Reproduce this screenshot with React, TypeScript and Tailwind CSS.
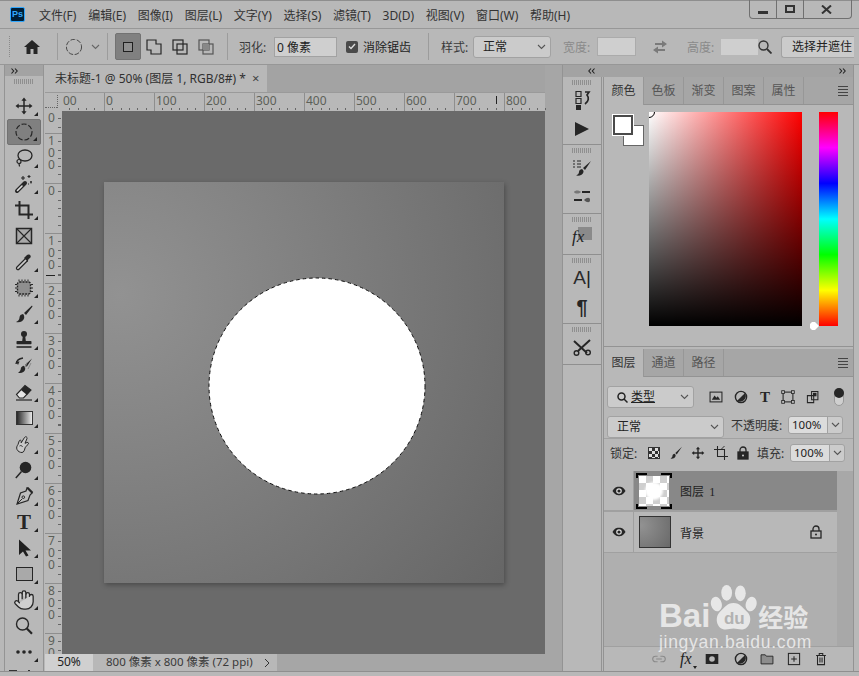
import React from 'react';
import { Hand } from 'lucide-react';

const INK = '#262626';

const Ico: React.FC<{ size?: number; children: React.ReactNode }> = ({ size = 20, children }) => (
  <svg width={size} height={size} viewBox="0 0 20 20" fill="none" stroke={INK} strokeWidth="1.5" className="shrink-0">
    {children}
  </svg>
);

const Sep = ({ ml }: { ml: string }) => <div className={`w-px h-[27px] bg-[#9c9c9c] shrink-0 ${ml}`} />;

const Chevron = ({ color = '#555' }: { color?: string }) => (
  <svg width="9" height="6" viewBox="0 0 9 6" fill="none" stroke={color} strokeWidth="1.1" className="shrink-0"><path d="M1 1l3.5 3.5L8 1" /></svg>
);

const Double = ({ left }: { left?: boolean }) => (
  <svg width="7" height="6" viewBox="0 0 7 6" fill="none" stroke="#222" strokeWidth="1.100" className="shrink-0">
    <path d={left ? 'M3 .5L.8 3 3 5.500M6.500 .5L4.300 3l2.200 2.500' : 'M.5 .5L2.700 3 .5 5.500M4 .5L6.200 3 4 5.500'} />
  </svg>
);

const MenuLines = () => (
  <div className="w-[10px] flex flex-col gap-[2px] shrink-0">
    <div className="h-px bg-[#444]" /><div className="h-px bg-[#444]" /><div className="h-px bg-[#444]" /><div className="h-px bg-[#444]" />
  </div>
);

const Grip = () => <div className="h-[5px] w-[20px] mx-auto bg-[repeating-linear-gradient(to_right,#8f8f8f_0,#8f8f8f_1px,transparent_1px,transparent_2px)]" />;

const tools: { icon: React.ReactNode; corner?: boolean; active?: boolean }[] = [
  { corner: true, icon: <Ico><path d="M10 1.5l2.6 3.2H7.400zM10 18.500l2.600-3.200H7.400zM1.500 10l3.200-2.600v5.200zM18.500 10l-3.200-2.600v5.200z" fill={INK} stroke="none" /><path d="M10 4v12M4 10h12" /></Ico> },
  { corner: true, active: true, icon: <Ico><circle cx="10" cy="10" r="8" strokeDasharray="5 2" strokeWidth="1.200" /></Ico> },
  { corner: true, icon: <Ico><ellipse cx="11" cy="7.500" rx="7" ry="5.500" strokeWidth="1.300" /><circle cx="5" cy="13.500" r="2" strokeWidth="1.200" /><path d="M5 15.500c0 1 .5 2 .5 3" strokeWidth="1.200" /></Ico> },
  { corner: true, icon: <Ico><path d="M3 17L11 9" stroke={INK} strokeWidth="4" strokeLinecap="round" /><path d="M3.500 16.500L8 12" stroke="#ddd" strokeWidth="1.600" strokeLinecap="round" /><path d="M9 2v4M7 4h4M15 1v3M13.500 2.500h3M17 7v2.500M16 8h2M14 10h1" strokeWidth="1.100" /></Ico> },
  { corner: true, icon: <Ico><path d="M5.500 1v13.500H19M1 5.500h13.500V19" strokeWidth="2" /></Ico> },
  { icon: <Ico><rect x="2.500" y="2.500" width="15" height="15" fill="#a9a9a9" /><path d="M2.500 2.500l15 15M17.500 2.500l-15 15" strokeWidth="1.200" /></Ico>, corner: false },
  { corner: true, icon: <Ico><path d="M11.500 6.500L3 15c-1 1-.5 1.800 0 2.200s1.300.8 2.200-.2l8.500-8.500" fill="#ccc" strokeWidth="1.200" /><path d="M10 6l1.500-1.500 1-1c1.500-2 4-1 4.200.6s-.9 2-2.200 3.200l-.5 1.200L14 10z" fill={INK} stroke="none" /></Ico> },
  { corner: true, icon: <Ico><rect x="3.500" y="4" width="13" height="12" rx="2" fill="#8f8f8f" strokeDasharray="2 1" strokeWidth="1.400" /><path d="M5 1.500v2M8 1.500v2M11 1.500v2M14 1.500v2M5 16.500v2M8 16.500v2M11 16.500v2M14 16.500v2M1 6.500h2M1 10h2M1 13.500h2M17 6.500h2M17 10h2M17 13.500h2" strokeWidth="1" /></Ico> },
  { corner: true, icon: <Ico><path d="M18 1.500L10 9l2 2 6.500-8.500zM9 10c-2 .3-3.500 1.500-3.500 3.500 0 2-1.500 3.500-3.500 4.500 3.500.8 7.500-.5 8.200-4 .2-1.500-.2-3-1.200-4z" fill={INK} stroke="none" /></Ico> },
  { corner: true, icon: <Ico><circle cx="10" cy="4" r="3" fill={INK} stroke="none" /><path d="M8.800 6h2.400l.6 5H8.200z" fill={INK} stroke="none" /><rect x="2.500" y="11" width="15" height="3.200" rx=".8" fill={INK} stroke="none" /><path d="M2.500 17h15" strokeWidth="1.600" /></Ico> },
  { corner: true, icon: <Ico><path d="M18 2.500L11 9l1.800 1.800zM9.800 9.800c-2 .3-3 1.700-3 3 0 1.500-1.200 3-2.800 4 3.200.8 6.500-.3 7.200-3.500.2-1.300-.3-2.600-1.400-3.500z" fill={INK} stroke="none" /><path d="M9 2C5.500 2.500 2.500 5 2 8" strokeWidth="1.400" /><path d="M2 5.500h3.500L4 9z" fill={INK} stroke="none" /><path d="M13 6.500l-2 5M17 7l-3 6" stroke="#888" strokeWidth="1" /></Ico> },
  { corner: true, icon: <Ico><path d="M2.500 12.500L11 3.500l6 4.500-7.500 8H5.500z" fill="#e5e5e5" stroke={INK} strokeWidth="1.100" /><path d="M7 8L11 3.500l6 4.500-4 5z" fill={INK} stroke="none" /><path d="M2 18h16" strokeWidth="1.200" /></Ico> },
  { corner: true, icon: <svg width="17" height="14" viewBox="0 0 17 14" className="shrink-0"><defs><linearGradient id="grad"><stop offset="0" stopColor="#222" /><stop offset="1" stopColor="#eee" /></linearGradient></defs><rect x=".5" y=".5" width="16" height="13" fill="url(#grad)" stroke="#333" /></svg> },
  { corner: true, icon: <Ico><path d="M8 18.500c-2 0-4-1-5-3-.8-2 0-3.500 1-5l1.200-3.500c.5-1.300 2-1 2 .2v1.600l3.300-5.300c1-1.500 3-.5 2.500 1l-2 4.800 2-.8c1.500-.5 2 1 1 2l-2.800 2.800c-.5 2.200-1.200 5.200-3.200 5.200z" fill="#c8c8c8" strokeWidth="1" /><path d="M5.500 12c1-.8 2.500-.5 3 .8" strokeWidth=".9" /></Ico> },
  { corner: true, icon: <Ico><circle cx="11.500" cy="7.500" r="5.800" fill={INK} stroke="none" /><path d="M7.500 11.500L1.800 18" strokeWidth="1.500" /></Ico> },
  { corner: true, icon: <Ico><path d="M13 2l5 5-2 2-2 5.500L3 18l3.500-11L12 5z" fill="#bdbdbd" strokeWidth="1.200" /><path d="M12.500 1.800l5.700 5.700 1-1.500-5-5z" fill={INK} stroke="none" /><path d="M3 18l5-5" strokeWidth="1" /><circle cx="9.300" cy="11.200" r="1.300" strokeWidth="1" /></Ico> },
  { corner: true, icon: <span className="font-['Liberation_Serif',serif] font-bold text-[21px] leading-none text-[#262626]">T</span> },
  { corner: true, icon: <Ico><path d="M5 1.500v15.500l4-3.500 3 5 2.500-1-3-5h5.500z" fill="#1f1f1f" stroke="none" /></Ico> },
  { corner: true, icon: <svg width="17" height="14" viewBox="0 0 17 14" className="shrink-0"><rect x=".5" y=".5" width="16" height="13" fill="#a9a9a9" stroke="#262626" /></svg> },
  { corner: true, icon: <Hand size={22} strokeWidth={1.400} color="#262626" fill="#cfcfcf" /> },
  { corner: false, icon: <Ico><circle cx="8.500" cy="8" r="6" fill="#bcbcbc" strokeWidth="1.400" /><path d="M12.800 12.500l5.200 5.200" strokeWidth="2.200" /></Ico> },
  { corner: true, icon: <svg width="16" height="4" viewBox="0 0 16 4" className="shrink-0"><circle cx="2" cy="2" r="1.800" fill="#262626" /><circle cx="8" cy="2" r="1.800" fill="#262626" /><circle cx="14" cy="2" r="1.800" fill="#262626" /></svg> },
];

const Toolbar = () => (
  <div className="relative w-[40px] shrink-0 ml-[4px] border-x border-[#949494] flex flex-col overflow-hidden">
    <div className="h-[11px] bg-[#a3a3a3] pl-[6px] pt-[3px] shrink-0"><Double /></div>
    <div className="h-[17px] pt-[3px] shrink-0"><Grip /></div>
    {tools.map((t, i) => (
      <div key={i} className="h-[26px] shrink-0 px-[2px]">
        <div className={`relative h-full flex items-center justify-center rounded-[2px] ${t.active ? 'bg-[#808080] border border-[#727272]' : ''}`}>
          {t.icon}
          {t.corner && <div className="absolute right-[3px] bottom-[3px] w-0 h-0 border-l-[4px] border-l-transparent border-b-[4px] border-b-[#222]" />}
        </div>
      </div>
    ))}
    <div className="absolute left-[4px] bottom-0 w-[8px] h-px bg-[#333]" />
    <div className="absolute left-[23px] bottom-0 w-[2px] h-px bg-[#333]" />
  </div>
);

const rulerTop = ['00', '0', '100', '200', '300', '400', '500', '600', '700', '800'];
const rulerLeft = ['0', '100', '0', '100', '200', '300', '400', '500', '600', '700', '800', '900'];

const TopRuler = () => (
  <div className="h-[18px] flex shrink-0 bg-[#b8b8b8] text-[#5c6058] text-[12px] leading-[15px]">
    <div className="w-[17px] shrink-0 relative">
      <div className="absolute left-[12px] top-[2px] h-[13px] border-l border-dotted border-[#666]" />
      <div className="absolute left-0 top-[14px] w-[12px] border-t border-dotted border-[#666]" />
    </div>
    {rulerTop.map((n, i) => (
      <div key={n} className={`relative shrink-0 h-full pl-[1px] ${i === 0 ? 'w-[42px]' : 'w-[50px] border-l border-[#8e8e8e]'}`}>
        {n}
        <div className="absolute left-0 right-0 bottom-[1px] h-[2px] bg-[repeating-linear-gradient(to_right,transparent_0,transparent_7.3px,#666_7.3px,#666_8.3px)]" />
      </div>
    ))}
    <div className="relative flex-1 h-full bg-[repeating-linear-gradient(to_right,transparent_0,transparent_7.3px,#666_7.3px,#666_8.3px)] bg-[length:100%_2px] bg-no-repeat bg-bottom" />
    <div className="absolute left-[496px] top-[96px] w-px h-[8px] bg-[#222]" />
  </div>
);

const LeftRuler = () => (
  <div className="w-[17px] shrink-0 overflow-hidden flex flex-col bg-[#b8b8b8] text-[#5c6058] text-[12px] leading-[12px]">
    {rulerLeft.map((n, i) => (
      <div key={i} className={`relative shrink-0 pl-[3px] pt-[1px] ${i === 0 ? 'h-[22px]' : 'h-[50px] border-t border-[#8e8e8e]'}`}>
        {n.split('').map((d, j) => <div key={j}>{d}</div>)}
        <div className="absolute top-0 bottom-0 right-[1px] w-[3px] bg-[repeating-linear-gradient(to_bottom,transparent_0,transparent_7.3px,#666_7.3px,#666_8.3px)]" />
      </div>
    ))}
    <div className="absolute left-[46px] top-[275px] w-[9px] h-px bg-[#222]" />
  </div>
);

const Canvas = () => (
  <div className="flex-1 bg-[#6a6a6a] flex items-center justify-center overflow-hidden">
    <div className="relative w-[400px] h-[401px] shrink-0 shadow-[1px_2px_5px_rgba(0,0,0,0.3)] bg-[radial-gradient(circle_at_4%_28%,#929292_0,#626262_520px)]">
      <svg width="218" height="218" viewBox="0 0 218 218" className="absolute left-[104px] top-[95px]">
        <circle cx="109" cy="109" r="108" fill="#fff" stroke="#111" strokeWidth="1" strokeDasharray="3.500 3" />
      </svg>
    </div>
  </div>
);

const DocArea = () => (
  <div className="w-[500px] ml-[1px] shrink-0 flex flex-col">
    <div className="h-[28px] bg-[#a3a3a3] shrink-0 flex border-b border-[#9a9a9a]">
      <div className="w-[222px] bg-[#b8b8b8] flex items-center pl-[10px] text-[12px] text-[#303030] whitespace-nowrap">
        未标题-1 @ 50% (图层 1, RGB/8#) *
        <span className="ml-[6px] text-[13px] text-[#444] leading-none">×</span>
      </div>
    </div>
    <TopRuler />
    <div className="flex-1 flex min-h-0">
      <LeftRuler />
      <Canvas />
    </div>
    <div className="h-[17px] shrink-0 flex text-[12px] leading-[16px] text-[#3a3a3a] bg-[#a6a6a6]">
      <div className="w-[48px] bg-[#d0d0d0] text-center text-[#222]">50%</div>
      <div className="w-[184px] bg-[#b8b8b8] flex pl-[13px] whitespace-nowrap">
        <span className="w-[158px] text-[11.500px]">800 像素 x 800 像素 (72 ppi)</span>
        <svg width="6" height="10" viewBox="0 0 6 10" fill="none" stroke="#333" className="mt-[4px]"><path d="M1 1l4 4-4 4" /></svg>
      </div>
    </div>
  </div>
);

const dockGroups: { h: string; items: React.ReactNode[] }[] = [
  { h: 'h-[68px]', items: [
    <Ico key="h"><path d="M4 1.500h5v5H4zM4 8.500h5v5H4z" strokeWidth="1.200" /><path d="M4 15h5v5H4z" fill={INK} stroke="none" /><path d="M13 2h4l-2 3c2 2.500 2 6-2 9" strokeWidth="1.700" /></Ico>,
    <Ico key="p"><path d="M3 3l14 7-14 7z" fill={INK} stroke="none" /></Ico>,
  ] },
  { h: 'h-[69px]', items: [
    <Ico key="b"><path d="M1 3h2M1 6h2M1 9h2M5 3h4M5 6h4M5 9h4" strokeWidth="1.200" /><path d="M19 3l-8 7 2 2zM10 11c-2 .3-3 1.500-3 3 0 1.500-1 2.500-3 3.500 3.500.6 7-.5 7.500-3.500.2-1-.3-2-1.500-3z" fill={INK} stroke="none" /></Ico>,
    <Ico key="s"><path d="M10 5h8M2 13h8" strokeWidth="1.800" /><path d="M2 5c1-2 5-2 7 0-2 2-6 2-7 0z" fill="#777" stroke="none" /><path d="M18 13c0-3-3-3-6 0 3 3 6 3 6 0z" fill="#555" stroke="none" /></Ico>,
  ] },
  { h: 'h-[41px]', items: [
    <div key="f" className="relative w-[20px] h-[20px]">
      <div className="absolute right-0 top-0 w-[14px] h-[13px] bg-[#8a8a8a]" />
      <span className="absolute left-[0px] top-[1px] font-['Liberation_Serif',serif] italic text-[17px] leading-[18px] text-[#222]">fx</span>
    </div>,
  ] },
  { h: 'h-[69px]', items: [
    <span key="a" className="text-[19px] leading-none text-[#2b2b2b] font-['Liberation_Sans',sans-serif]">A<span className="font-light text-[#222]">|</span></span>,
    <span key="q" className="text-[20px] leading-none font-bold text-[#262626] font-['Liberation_Sans',sans-serif]">¶</span>,
  ] },
  { h: 'h-[41px]', items: [
    <Ico key="t"><path d="M2 4l13 12M18 3L6 14" strokeWidth="2" /><circle cx="4.500" cy="16" r="2.300" strokeWidth="1.400" /><circle cx="16" cy="15.500" r="2.300" strokeWidth="1.400" /></Ico>,
  ] },
];

const Dock = () => (
  <div className="w-[38px] shrink-0 flex flex-col">
    {dockGroups.map((g, i) => (
      <div key={i} className={`shrink-0 border-b border-[#8f8f8f] pt-[3px] ${g.h}`}>
        <div className="h-[5px]"><Grip /></div>
        {g.items.map((icon, j) => <div key={j} className="h-[29px] flex items-center justify-center">{icon}</div>)}
      </div>
    ))}
  </div>
);

const PanelTabs = ({ items }: { items: string[] }) => (
  <div className="h-[28px] shrink-0 flex bg-[#a6a6a6] border-b border-[#939393] text-[12px]">
    {items.map((t, i) => (
      <div key={t} className={`w-[40px] flex items-center justify-center border-r border-[#979797] ${i === 0 ? 'bg-[#b8b8b8] text-[#333] h-[28px]' : 'text-[#555]'}`}>{t}</div>
    ))}
    <div className="flex-1 flex items-center justify-end pr-[5px]"><MenuLines /></div>
  </div>
);

const ColorPanel = () => (
  <div className="h-[270px] shrink-0 flex flex-col border-b border-[#939393]">
    <PanelTabs items={['颜色', '色板', '渐变', '图案', '属性']} />
    <div className="flex-1 flex pt-[7px] pl-[8px]">
      <div className="relative w-[37px] h-[36px] shrink-0 mt-[2px]">
        <div className="absolute left-[11px] top-[11px] w-[21px] h-[21px] bg-white border border-[#666]" />
        <div className="absolute left-[1px] top-[1px] w-[20px] h-[20px] bg-white border-2 border-[#4a4a4a] outline outline-1 outline-white" />
      </div>
      <div className="relative w-[153px] h-[214px] shrink-0 overflow-hidden bg-[linear-gradient(to_bottom,transparent,#000),linear-gradient(to_right,#fff,#f00)]">
        <div className="absolute left-[-6px] top-[-6px] w-[12px] h-[12px] rounded-full border border-black" />
      </div>
      <div className="relative w-[19px] h-[214px] ml-[17px] shrink-0 bg-[linear-gradient(to_bottom,#f00,#f0f,#00f,#0ff,#0f0,#ff0,#f00)]">
        <svg width="9" height="8" viewBox="0 0 9 8" className="absolute left-[-9px] bottom-[-4px]"><path d="M2 0h3l4 4-4 4H2L0 6V2z" fill="#fff" /></svg>
      </div>
    </div>
  </div>
);

const Box = ({ className, children }: { className: string; children: React.ReactNode }) => (
  <div className={`bg-[#cbcbcb] border border-[#a2a2a2] rounded-[3px] flex items-center shrink-0 ${className}`}>{children}</div>
);

const NumInput = () => (
  <Box className="w-[55px] h-[18px] ml-[5px] text-[11.500px] text-[#222]">
    <div className="w-[39px] bg-[#dcdcdc] h-full rounded-l-[3px] border-r border-[#a2a2a2] pl-[3px] leading-[16px]">100%</div>
    <div className="flex-1 flex justify-center"><Chevron /></div>
  </Box>
);

const Eye = () => (
  <svg width="14" height="10" viewBox="0 0 14 10"><path d="M.500 5C3 1 5 .8 7 .8S11 1 13.500 5C11 9 9 9.200 7 9.200S3 9 .500 5z" fill={INK} /><circle cx="7" cy="5" r="2.800" fill="#ddd" /><circle cx="7" cy="5" r="1.600" fill={INK} /></svg>
);

const LockGlyph = ({ filled }: { filled?: boolean }) => (
  <svg width="12" height="14" viewBox="0 0 12 14" fill="none" stroke={INK} strokeWidth="1.300"><path d="M3 6V4a3 3 0 016 0v2" /><rect x="1" y="6" width="10" height="7" fill={filled ? INK : 'none'} /><circle cx="6" cy="9.500" r="1" fill={filled ? '#ccc' : INK} stroke="none" /></svg>
);

const LayersPanel = () => (
  <div className="flex-1 flex flex-col min-h-0 mt-[2px] relative">
    <PanelTabs items={['图层', '通道', '路径']} />
    <div className="h-[35px] shrink-0 flex items-start pt-[9px] pl-[3px]">
      <Box className="w-[87px] h-[22px] text-[12px] text-[#222] pl-[9px]">
        <svg width="11" height="11" viewBox="0 0 11 11" fill="none" stroke="#222" strokeWidth="1.500"><circle cx="4.500" cy="4.500" r="3.500" /><path d="M7 7l3.500 3.500" /></svg>
        <span className="ml-[3px] underline">类型</span>
        <div className="ml-auto mr-[4px]"><Chevron /></div>
      </Box>
      <div className="flex items-center h-[22px]">
        <div className="ml-[15px]"><Ico size={14}><rect x="1.500" y="3" width="17" height="14" strokeWidth="1.500" /><path d="M4 14l4-6 2.500 3 2-2 3.500 5z" fill={INK} stroke="none" /></Ico></div>
        <div className="ml-[11px]"><Ico size={14}><circle cx="10" cy="10" r="8" strokeWidth="2" /><path d="M10 10l5.500-5.500a8 8 0 01-11 11z" fill={INK} stroke="none" /></Ico></div>
        <span className="ml-[10px] w-[14px] text-center font-['Liberation_Serif',serif] font-bold text-[15px] leading-none text-[#262626]">T</span>
        <div className="ml-[9px]"><Ico size={14}><rect x="3" y="3" width="14" height="14" /><rect x="1" y="1" width="4" height="4" fill="#bbb" strokeWidth="1.200" /><rect x="15" y="1" width="4" height="4" fill="#bbb" strokeWidth="1.200" /><rect x="1" y="15" width="4" height="4" fill="#bbb" strokeWidth="1.200" /><rect x="15" y="15" width="4" height="4" fill="#bbb" strokeWidth="1.200" /></Ico></div>
        <div className="ml-[11px]"><Ico size={14}><path d="M8 2h9v12H8zM2 8h9v10H2z" fill="#bbb" strokeWidth="1.500" /><path d="M10 4h5v5h-5z" fill={INK} stroke="none" /></Ico></div>
        <div className="relative ml-[14px] w-[10px] h-[18px] rounded-full bg-[#cfcfcf] border border-[#999]">
          <div className="absolute left-[-1px] top-[-1px] w-[10px] h-[10px] rounded-full bg-[#262626]" />
        </div>
      </div>
    </div>
    <div className="h-[27px] shrink-0 flex items-start pt-[4px] pl-[3px] border-b border-[#a2a2a2]">
      <Box className="w-[117px] h-[22px] text-[12px] text-[#222] pl-[9px]">正常<div className="ml-auto mr-[4px]"><Chevron /></div></Box>
      <span className="ml-[7px] w-[52px] text-[12px] leading-[20px] text-[#333] whitespace-nowrap">不透明度:</span>
      <NumInput />
    </div>
    <div className="h-[32px] shrink-0 flex items-start pt-[5px] pl-[6px]">
      <span className="w-[29px] text-[12px] leading-[20px] text-[#333] whitespace-nowrap">锁定:</span>
      <div className="flex items-center h-[18px]">
        <div className="ml-[9px] w-[12px] h-[12px] border border-[#333] bg-[conic-gradient(#333_25%,#ddd_0_50%,#333_0_75%,#ddd_0)] bg-[length:6px_6px]" />
        <div className="ml-[9px]"><Ico size={14}><path d="M18.500 1L9 10l2 2zM8 11c-2 .3-3 1.500-3 3s-1 3-3 4c3.500.5 7-.5 7.500-4 .1-1.200-.3-2.200-1.500-3z" fill={INK} stroke="none" /></Ico></div>
        <div className="ml-[8px]"><Ico size={14}><path d="M10 1l3 3.500H7zM10 19l3-3.500H7zM1 10l3.500-3v6zM19 10l-3.500-3v6z" fill={INK} stroke="none" /><path d="M10 4v12M4 10h12" strokeWidth="2" /></Ico></div>
        <div className="ml-[9px]"><Ico size={14}><path d="M5 0v15h15M0 5h15v15" strokeWidth="1.500" /><path d="M10 5l5-5" strokeWidth="1.300" /></Ico></div>
        <div className="ml-[9px]"><LockGlyph filled /></div>
      </div>
      <span className="ml-[8px] w-[28px] text-[12px] leading-[20px] text-[#333] whitespace-nowrap">填充:</span>
      <NumInput />
    </div>
    <div className="flex-1 flex min-h-0">
      <div className="flex-1 flex flex-col bg-[#afafaf]">
        <div className="h-[41px] shrink-0 flex border-b-2 border-[#a0a0a0]">
          <div className="w-[30px] bg-[#b8b8b8] border-r border-[#a0a0a0] flex items-center justify-center"><Eye /></div>
          <div className="flex-1 bg-[#888888] flex items-center">
            <div className="relative ml-[2px] w-[36px] h-[36px] flex items-center justify-center">
              <div className="w-[30px] h-[30px] bg-[conic-gradient(#cfcfcf_25%,#fff_0_50%,#cfcfcf_0_75%,#fff_0)] bg-[length:14px_14px] flex items-center justify-center">
                <div className="w-[18px] h-[18px] rounded-full bg-white blur-[1px]" />
              </div>
              <div className="absolute left-0 top-0 w-[11px] h-[5px] border-l-2 border-t-2 border-black" />
              <div className="absolute right-0 top-0 w-[11px] h-[5px] border-r-2 border-t-2 border-black" />
              <div className="absolute left-0 bottom-0 w-[11px] h-[5px] border-l-2 border-b-2 border-black" />
              <div className="absolute right-0 bottom-0 w-[11px] h-[5px] border-r-2 border-b-2 border-black" />
            </div>
            <span className="ml-[8px] pt-[3px] text-[12px] text-[#1f1f1f]">图层 <span className="font-['Liberation_Serif',serif] ml-[2px]">1</span></span>
          </div>
        </div>
        <div className="h-[41px] shrink-0 flex border-b border-[#a0a0a0] bg-[#b8b8b8]">
          <div className="w-[30px] border-r border-[#a0a0a0] flex items-center justify-center"><Eye /></div>
          <div className="flex-1 flex items-center">
            <div className="ml-[5px] w-[32px] h-[32px] border border-[#333] bg-[radial-gradient(circle_at_4%_28%,#929292_0,#626262_42px)]" />
            <span className="ml-[9px] pt-[3px] text-[12px] text-[#1f1f1f]">背景</span>
            <div className="ml-auto mr-[15px] flex"><LockGlyph /></div>
          </div>
        </div>
      </div>
      <div className="w-[16px] shrink-0 bg-[#a8a8a8]" />
    </div>
    <div className="h-[25px] shrink-0 bg-[#b8b8b8] border-t border-[#a0a0a0] flex items-center pl-[48px]">
      <Ico size={14}><path d="M8 6H5a3.500 3.500 0 000 8h3M12 6h3a3.500 3.500 0 010 8h-3M6 10h8" stroke="#8a8a8a" strokeWidth="1.600" /></Ico>
      <span className="relative ml-[14px] w-[14px] font-['Liberation_Serif',serif] italic text-[16px] leading-none text-[#222]">
        fx
        <div className="absolute right-[-3px] bottom-[-2px] w-0 h-0 border-x-[2px] border-x-transparent border-t-[3px] border-t-[#222]" />
      </span>
      <div className="ml-[11px]"><Ico size={14}><path d="M1 3h18v14H1zm9 3a4 4 0 100 8 4 4 0 000-8z" fill={INK} fillRule="evenodd" stroke="none" /></Ico></div>
      <div className="ml-[15px]"><Ico size={14}><circle cx="10" cy="10" r="8" strokeWidth="2" /><path d="M10 10l5.500-5.500a8 8 0 01-11 11z" fill={INK} stroke="none" /></Ico></div>
      <div className="ml-[12px]"><Ico size={14}><path d="M1.500 4h6l1.500 2h9.500v11h-17z" fill="#8d8d8d" strokeWidth="1.300" /></Ico></div>
      <div className="ml-[13px]"><Ico size={14}><rect x="2" y="2" width="16" height="16" strokeWidth="1.500" /><path d="M10 6v8M6 10h8" strokeWidth="1.500" /></Ico></div>
      <div className="ml-[13px]"><Ico size={14}><path d="M3 5h14M7.500 5V2h5v3M5 5v13h10V5M8.500 8v7M11.500 8v7" strokeWidth="1.500" /></Ico></div>
    </div>
    <Watermark />
  </div>
);

const Watermark = () => (
  <div className="absolute left-[55px] top-[235px] w-[156px] h-[74px] text-white/70 pointer-events-none">
    <div className="flex items-end h-[48px]">
      <span className="font-['Liberation_Sans',sans-serif] font-bold text-[33px] leading-[32px]">Bai</span>
      <div className="relative w-[48px] h-[48px] shrink-0">
        <svg width="48" height="48" viewBox="0 0 49 48" className="absolute left-0 top-0" fill="currentColor">
          <ellipse cx="17" cy="8.500" rx="5.500" ry="8" />
          <ellipse cx="31" cy="9" rx="5.500" ry="8" />
          <ellipse cx="6.500" cy="20" rx="5.500" ry="7.500" transform="rotate(-15 6.500 20)" />
          <ellipse cx="42" cy="20" rx="5.500" ry="7.500" transform="rotate(15 42 20)" />
          <path d="M24 19c7 0 9 5 14 9 6 5 3 18-6 18-3 0-5-1-8-1s-5 1-8 1c-9 0-12-12-6-18 5-4 7-9 14-9z" />
        </svg>
        <span className="absolute left-[10px] top-[26px] w-[28px] text-center font-['Liberation_Sans',sans-serif] font-bold text-[17px] leading-[18px] text-[#b2b2b2]">du</span>
      </div>
      <span className="font-bold text-[25px] leading-[30px] whitespace-nowrap">经验</span>
    </div>
    <div className="font-['Liberation_Sans',sans-serif] text-[17.500px] leading-[20px] tracking-[.7px] whitespace-nowrap">jingyan.baidu.com</div>
  </div>
);

const menus = ['文件(F)', '编辑(E)', '图像(I)', '图层(L)', '文字(Y)', '选择(S)', '滤镜(T)', '3D(D)', '视图(V)', '窗口(W)', '帮助(H)'];

const TitleBar = () => (
  <div className="h-[28px] shrink-0 flex border-t border-[#8e8e8e]">
    <div className="ml-[10px] mt-[6px] w-[15px] h-[15px] bg-[#001e36] border border-[#31a8ff] rounded-[2px] text-[#31a8ff] text-[9px] leading-[13px] text-center font-bold font-['Liberation_Sans',sans-serif] shrink-0">Ps</div>
    <div className="ml-[14px] mt-[5px] flex gap-[11.700px] text-[12px] leading-[20px] text-[#333] whitespace-nowrap">
      {menus.map(m => <span key={m}>{m}</span>)}
    </div>
    <div className="ml-auto mr-[7px] w-[103px] h-[19px] -mt-px flex border-x border-b border-[#707070] rounded-b-[4px]">
      <div className="w-[27px] border-r border-[#707070] flex items-end justify-center pb-[4px]"><div className="w-[10px] h-[3px] bg-[#333]" /></div>
      <div className="w-[27px] border-r border-[#707070] flex items-center justify-center"><div className="w-[10px] h-[8px] border-2 border-[#333]" /></div>
      <div className="flex-1 flex items-center justify-center pr-[2px]">
        <svg width="11" height="9" viewBox="0 0 11 9" stroke="#333" strokeWidth="2"><path d="M1 .5l9 8M10 .5l-9 8" /></svg>
      </div>
    </div>
  </div>
);

const Label = ({ text, className }: { text: string; className: string }) => (
  <span className={`text-[12px] pt-[2px] whitespace-nowrap shrink-0 ${className}`}>{text}</span>
);

const OptionsBar = () => (
  <div className="h-[37px] shrink-0 flex items-center border-t border-[#979797] border-b border-b-[#979797] pl-[9px] text-[#333]">
    <div className="w-[2px] h-[21px] shrink-0 border-l border-dotted border-[#8a8a8a]" />
    <div className="ml-[13px] shrink-0">
      <svg width="16" height="14" viewBox="0 0 16 14" fill={INK}><path d="M8 0L0 7h2.500v7h4V9h3v5h4V7H16z" /></svg>
    </div>
    <Sep ml="ml-[17px]" />
    <div className="ml-[8px]"><Ico size={16}><circle cx="10" cy="10" r="9.500" strokeDasharray="6 2" strokeWidth="1.200" stroke="#444" /></Ico></div>
    <div className="ml-[9px]"><Chevron color="#666" /></div>
    <Sep ml="ml-[7px]" />
    <div className="ml-[7px] w-[26px] h-[27px] shrink-0 rounded-[2px] bg-[#808080] border border-[#727272] flex items-center justify-center">
      <div className="w-[10px] h-[10px] border border-[#1f1f1f] bg-[#8f8f8f]" />
    </div>
    <div className="ml-[3px]"><Ico><path d="M3 3h9v4h5v10H7v-4H3z" strokeWidth="1.200" /></Ico></div>
    <div className="ml-[6px]"><Ico><rect x="3" y="3" width="10" height="10" strokeWidth="1.200" /><rect x="7" y="7" width="10" height="10" strokeWidth="1.200" /></Ico></div>
    <div className="ml-[6px]"><Ico><rect x="3" y="3" width="10" height="10" strokeWidth="1.200" stroke="#555" /><rect x="7" y="7" width="10" height="10" strokeWidth="1.200" stroke="#555" /><rect x="7" y="7" width="6" height="6" fill="#888" stroke="none" /></Ico></div>
    <Sep ml="ml-[11px]" />
    <Label text="羽化:" className="ml-[11px] w-[29px] text-[#3a3a3a]" />
    <div className="ml-[6px] w-[63px] h-[20px] shrink-0 bg-[#cfcfcf] border border-[#a2a2a2] text-[12px] text-[#222] leading-[19px] pl-[2px]">0 像素</div>
    <div className="ml-[9px] w-[12px] h-[12px] rounded-[2px] bg-[#4a4a4a] shrink-0 flex items-center justify-center">
      <svg width="8" height="7" viewBox="0 0 8 7" fill="none" stroke="#ddd" strokeWidth="1.400"><path d="M1 3.500l2 2L7 1" /></svg>
    </div>
    <Label text="消除锯齿" className="ml-[5px] w-[49px] text-[#222]" />
    <Sep ml="ml-[16px]" />
    <Label text="样式:" className="ml-[12px] w-[30px] text-[#3a3a3a]" />
    <Box className="ml-[2px] w-[78px] h-[22px] pl-[9px] text-[12px] text-[#222]">正常<div className="ml-auto mr-[4px]"><Chevron /></div></Box>
    <Label text="宽度:" className="ml-[12px] w-[28px] text-[#8a8a8a]" />
    <div className="ml-[6px] w-[39px] h-[19px] shrink-0 bg-[#cfcfcf] border border-[#ababab]" />
    <div className="ml-[16px]">
      <svg width="16" height="14" viewBox="0 0 16 14" fill="#7a7a7a"><path d="M15 4l-5-3.500V3H3v2h7v2.500zM1 10l5 3.500V11h7V9H6V6.500z" /></svg>
    </div>
    <Label text="高度:" className="ml-[19px] w-[28px] text-[#8a8a8a]" />
    <div className="ml-[6px] w-[37px] h-[16px] shrink-0 bg-[#cfcfcf]" />
    <div className="shrink-0">
      <svg width="14" height="14" viewBox="0 0 14 14" fill="none" stroke="#333" strokeWidth="1.400"><circle cx="5.500" cy="5.500" r="4.500" /><path d="M9 9l4.500 4.500" strokeWidth="1.800" /></svg>
    </div>
    <div className="ml-[9px] w-[73px] h-[22px] shrink-0 overflow-hidden bg-[#cbcbcb] border-l border-y border-[#a2a2a2] rounded-l-[3px] pl-[10px] text-[12px] leading-[20px] text-[#222] whitespace-nowrap">选择并遮住</div>
  </div>
);

export default function App() {
  return (
    <div className="relative w-[859px] h-[676px] overflow-hidden bg-[#b8b8b8] flex flex-col font-['Noto_Sans','Noto_Sans_CJK_SC',sans-serif]">
      <TitleBar />
      <OptionsBar />
      <div className="h-[607px] shrink-0 flex border-b border-[#8f8f8f]">
        <Toolbar />
        <DocArea />
        <div className="w-[17px] shrink-0 bg-[#a6a6a6]" />
        <div className="w-[292px] shrink-0 flex flex-col border-x border-[#939393]">
          <div className="h-[12px] shrink-0 bg-[#a3a3a3] flex justify-between pl-[25px] pr-[7px] pt-[3px]">
            <Double left /><Double />
          </div>
          <div className="flex-1 flex min-h-0">
            <Dock />
            <div className="w-px bg-[#939393] shrink-0" />
            <div className="w-px shrink-0" />
            <div className="flex-1 flex flex-col min-h-0 border-l border-[#939393]">
              <ColorPanel />
              <LayersPanel />
            </div>
          </div>
        </div>
      </div>
    </div>
  );
}
